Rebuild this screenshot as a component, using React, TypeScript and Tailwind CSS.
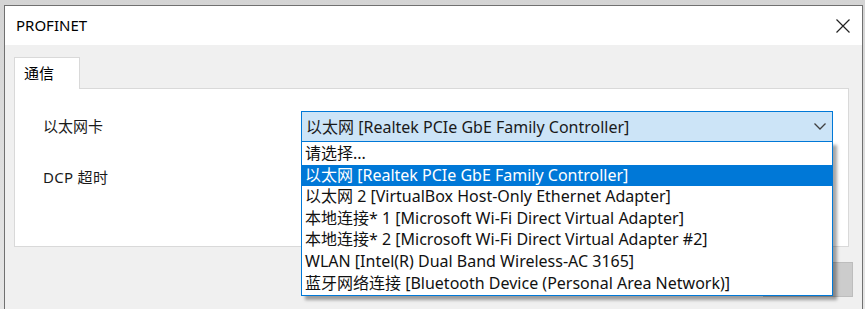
const FONT = { fontFamily: '"Noto Sans", "Noto Sans CJK SC", sans-serif' };

const ADAPTERS = [
  "请选择...",
  "以太网 [Realtek PCIe GbE Family Controller]",
  "以太网 2 [VirtualBox Host-Only Ethernet Adapter]",
  "本地连接* 1 [Microsoft Wi-Fi Direct Virtual Adapter]",
  "本地连接* 2 [Microsoft Wi-Fi Direct Virtual Adapter #2]",
  "WLAN [Intel(R) Dual Band Wireless-AC 3165]",
  "蓝牙网络连接 [Bluetooth Device (Personal Area Network)]",
];

const SELECTED = 1;

function AdapterSelect() {
  return (
    <div className="relative w-[532px]">
      <div className="flex h-[31px] items-center justify-between border border-[#0078d7] bg-[#cce4f7] pl-[4px] pr-[6px] text-[16px] text-[#1a1a1a]">
        <span>{ADAPTERS[SELECTED]}</span>
        <svg width="12" height="7" viewBox="0 0 12 7" className="text-[#404040]">
          <polyline points="0.5,0.5 6,6 11.5,0.5" fill="none" stroke="currentColor" strokeWidth="1.3" />
        </svg>
      </div>
      <ul className="absolute left-0 top-[30px] z-10 w-[532px] border border-[#0078d7] bg-white py-[1px] shadow-[4px_4px_3px_rgba(0,0,0,0.35)]">
        {ADAPTERS.map((name, i) => (
          <li
            key={name}
            className={`h-[21.6px] pl-[3px] text-[16px] leading-[21.6px] ${
              i === SELECTED ? "bg-[#0078d7] text-white" : "text-[#111]"
            }`}
          >
            {name}
          </li>
        ))}
      </ul>
    </div>
  );
}

export default function App() {
  return (
    <div className="h-[309px] overflow-hidden bg-gradient-to-b from-[#d4d4d4] to-[#e6e6e6] pl-[4px] pr-[2px] pt-[5px]" style={FONT}>
      <div className="h-[320px] border border-[#707070] bg-[#f0f0f0]">
        <div className="flex h-[39px] items-center justify-between bg-white pl-[11px] pr-[12px]">
          <span className="text-[15px] text-black">PROFINET</span>
          <svg width="14" height="14" viewBox="0 0 14 14" className="text-[#222]">
            <path d="M0.5 0.5 L13.5 13.5 M13.5 0.5 L0.5 13.5" stroke="currentColor" strokeWidth="1.2" />
          </svg>
        </div>

        <div className="px-[9px] pt-[12px]">
          <div className="flex">
            <div className="flex h-[32px] w-[66px] items-start border border-b-0 border-[#d9d9d9] bg-white pl-[9px] pt-[4px] text-[15px] text-black">
              通信
            </div>
          </div>
          <div className="-mt-px h-[159px] w-[835px] border border-[#d9d9d9] bg-white pl-[28px] pt-[22px]">
            <div className="flex items-center">
              <span className="w-[258px] text-[15px] text-[#1a1a1a]">以太网卡</span>
              <AdapterSelect />
            </div>
            <div className="mt-[24px] text-[15px] tracking-[0.3px] text-[#1a1a1a]">DCP 超时</div>
          </div>
          <div className="mt-[15px] flex w-[839px] justify-end">
            <div className="h-[35px] w-[90px] border border-[#bdbdbd] bg-[#cccccc]" />
          </div>
        </div>
      </div>
    </div>
  );
}
